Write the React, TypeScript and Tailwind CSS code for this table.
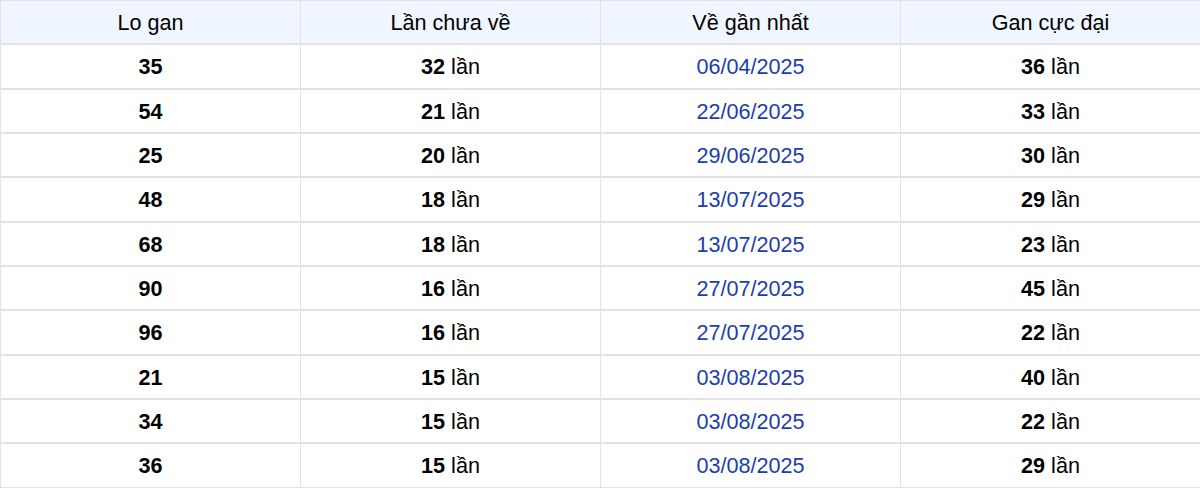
const rows = [
  { lo: '35', miss: 32, last: '06/04/2025', max: 36 },
  { lo: '54', miss: 21, last: '22/06/2025', max: 33 },
  { lo: '25', miss: 20, last: '29/06/2025', max: 30 },
  { lo: '48', miss: 18, last: '13/07/2025', max: 29 },
  { lo: '68', miss: 18, last: '13/07/2025', max: 23 },
  { lo: '90', miss: 16, last: '27/07/2025', max: 45 },
  { lo: '96', miss: 16, last: '27/07/2025', max: 22 },
  { lo: '21', miss: 15, last: '03/08/2025', max: 40 },
  { lo: '34', miss: 15, last: '03/08/2025', max: 22 },
  { lo: '36', miss: 15, last: '03/08/2025', max: 29 },
];

const headers = ['Lo gan', 'Lần chưa về', 'Về gần nhất', 'Gan cực đại'];

export default function App() {
  const cell = 'border-t border-b border-l border-[#e0e2e6] text-center align-middle h-[44.33px] p-0 pt-[2px]';
  return (
    <div className="w-[1200px] h-[488px] overflow-hidden bg-white text-[21.6px] text-black" style={{ fontFamily: '"Liberation Sans", Arial, sans-serif' }}>
      <table className="w-[1200px] table-fixed border-separate border-spacing-0">
        <thead>
          <tr className="bg-[#eff6ff]">
            {headers.map((h) => (
              <th key={h} className={`${cell} font-normal w-[300px]`}>{h}</th>
            ))}
          </tr>
        </thead>
        <tbody>
          {rows.map((r, i) => (
            <tr key={i}>
              <td className={`${cell} font-bold`}>{r.lo}</td>
              <td className={cell}><b>{r.miss}</b> lần</td>
              <td className={`${cell} text-[#1c3daf]`}>{r.last}</td>
              <td className={cell}><b>{r.max}</b> lần</td>
            </tr>
          ))}
        </tbody>
      </table>
    </div>
  );
}
